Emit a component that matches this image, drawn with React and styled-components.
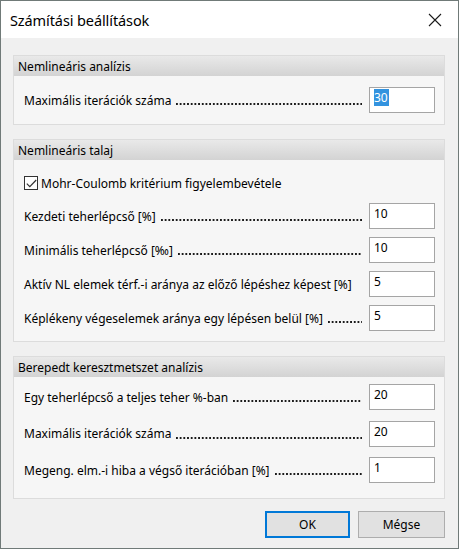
import React from "react";
import styled, { createGlobalStyle } from "styled-components";

const GlobalStyle = createGlobalStyle`
  html, body {
    margin: 0;
    padding: 0;
    background: #ffffff;
  }
  * {
    box-sizing: border-box;
  }
`;

const font = `"Noto Sans", "Open Sans", "Liberation Sans", sans-serif`;

// a dotted leader runs from the label up to the input box
const Field = ({ label, value, selected, leader = true }) => (
  <Row>
    <Label>{label}</Label>
    <Leader $show={leader} />
    <Input>
      {selected ? <Selected>{value}</Selected> : value}
    </Input>
  </Row>
);

const App = () => {
  return (
    <>
      <GlobalStyle />
      <Window>
        <TitleBar>
          <Title>Számítási beállítások</Title>
          <CloseButton aria-label="close">
            <svg width="14" height="14" viewBox="0 0 14 14">
              <path
                d="M1 1 L13 13 M13 1 L1 13"
                stroke="#1a1a1a"
                strokeWidth="1.1"
                fill="none"
              />
            </svg>
          </CloseButton>
        </TitleBar>

        <Body>
          <Group>
            <GroupHeader>Nemlineáris analízis</GroupHeader>
            <GroupBody $top={7} $bottom={7}>
              <Field label="Maximális iterációk száma" value="30" selected />
            </GroupBody>
          </Group>

          <Group>
            <GroupHeader>Nemlineáris talaj</GroupHeader>
            <GroupBody $top={11} $bottom={6}>
              <CheckRow>
                <CheckBox>
                  <svg width="11" height="9" viewBox="0 0 11 9">
                    <path
                      d="M0.8 4.6 L3.8 7.6 L10.2 1"
                      stroke="#333"
                      strokeWidth="1.2"
                      fill="none"
                    />
                  </svg>
                </CheckBox>
                <CheckLabel>Mohr-Coulomb kritérium figyelembevétele</CheckLabel>
              </CheckRow>
              <Field label="Kezdeti teherlépcső [%]" value="10" />
              <Field label="Minimális teherlépcső [‰]" value="10" />
              <Field
                label="Aktív NL elemek térf.-i aránya az előző lépéshez képest [%]"
                value="5"
                leader={false}
              />
              <Field
                label="Képlékeny végeselemek aránya egy lépésen belül [%]"
                value="5"
              />
            </GroupBody>
          </Group>

          <Group>
            <GroupHeader>Berepedt keresztmetszet analízis</GroupHeader>
            <GroupBody $top={2} $bottom={9} $rowHeight={36.5}>
              <Field label="Egy teherlépcső a teljes teher %-ban" value="20" />
              <Field label="Maximális iterációk száma" value="20" />
              <Field
                label="Megeng. elm.-i hiba a végső iterációban [%]"
                value="1"
              />
            </GroupBody>
          </Group>

          <Buttons>
            <Button $primary>OK</Button>
            <Button>Mégse</Button>
          </Buttons>
        </Body>
      </Window>
    </>
  );
};

export default App;

const Window = styled.div`
  width: 459px;
  height: 549px;
  border: 1px solid #707a78;
  display: flex;
  flex-direction: column;
  font-family: ${font};
  color: #000;
  overflow: hidden;
`;

const TitleBar = styled.div`
  height: 37px;
  background: #ffffff;
  display: flex;
  align-items: center;
  justify-content: space-between;
  padding: 0 0 0 9px;
  flex-shrink: 0;
`;

const Title = styled.div`
  font-size: 14.5px;
  color: #000;
  letter-spacing: -0.1px;
`;

const CloseButton = styled.div`
  width: 46px;
  height: 37px;
  display: flex;
  align-items: center;
  justify-content: center;
`;

const Body = styled.div`
  flex: 1;
  background: #f0f0f0;
  padding: 17px 13px 0 12px;
  display: flex;
  flex-direction: column;
  gap: 14px;
`;

const Group = styled.section`
  border: 1px solid #dcdcdc;
  background: #f6f6f6;
  display: flex;
  flex-direction: column;
`;

const GroupHeader = styled.div`
  height: 20px;
  padding: 0 0 0 4px;
  display: flex;
  align-items: center;
  font-size: 12px;
  background: linear-gradient(#e9e9e9, #d3d3d3);
`;

const GroupBody = styled.div`
  padding: ${(p) => p.$top}px 9px ${(p) => p.$bottom}px 10px;
  display: flex;
  flex-direction: column;

  & > div {
    height: ${(p) => p.$rowHeight || 34}px;
  }
`;

const Row = styled.div`
  display: flex;
  align-items: center;
  font-size: 12px;
`;

const Label = styled.span`
  white-space: nowrap;
  flex-shrink: 0;
`;

const Leader = styled.span`
  flex: 1;
  min-width: 0;
  height: 2px;
  margin: 8px 7px 0 5px;
  background: ${(p) =>
    p.$show
      ? "linear-gradient(to right, #1a1a1a 1.4px, transparent 1.4px) 0 0 / 3.7px 2px repeat-x"
      : "none"};
`;

const Input = styled.div`
  width: 66px;
  height: 26px;
  flex-shrink: 0;
  background: #ffffff;
  border: 1px solid #a5a5a5;
  padding: 1px 0 0 4px;
  font-size: 12px;
  line-height: 17px;
`;

const Selected = styled.span`
  background: #3393df;
  color: #ffffff;
  padding: 0 1px 0 0;
`;

const CheckRow = styled.div`
  display: flex;
  align-items: center;
  gap: 3px;
  margin-bottom: 4px;
  && {
    height: 24px;
  }
`;

const CheckBox = styled.div`
  width: 14px;
  height: 14px;
  border: 1px solid #333333;
  background: #ffffff;
  display: flex;
  align-items: center;
  justify-content: center;
`;

const CheckLabel = styled.span`
  font-size: 12px;
`;

const Buttons = styled.div`
  display: flex;
  justify-content: flex-end;
  gap: 8px;
  margin-top: -2px;
`;

const Button = styled.button`
  width: ${(p) => (p.$primary ? 85 : 87)}px;
  height: 27px;
  font-family: ${font};
  font-size: 12px;
  color: #000;
  background: #e1e1e1;
  border: ${(p) => (p.$primary ? "2px solid #0078d7" : "1px solid #adadad")};
  padding: 0;
`;
